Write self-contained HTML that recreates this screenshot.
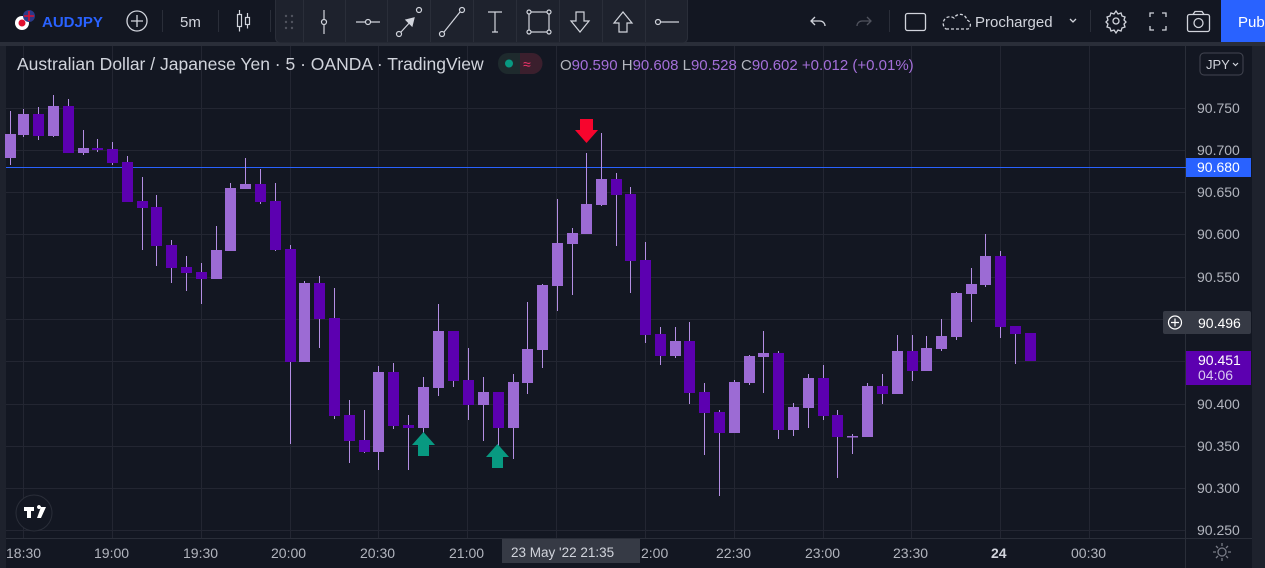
<!DOCTYPE html>
<html><head><meta charset="utf-8"><style>
*{margin:0;padding:0;box-sizing:border-box}
body{width:1265px;height:568px;overflow:hidden;background:#131722;font-family:"Liberation Sans",sans-serif;position:relative}
</style></head><body>
<svg width="1265" height="568" style="position:absolute;left:0;top:0" xmlns="http://www.w3.org/2000/svg" font-family="Liberation Sans, sans-serif">
<rect x="0" y="0" width="1265" height="42" fill="#131722"/>
<rect x="0" y="42" width="1265" height="4" fill="#2a2e39"/>
<rect x="0" y="46" width="6" height="522" fill="#1e222d"/>
<rect x="1252" y="46" width="13" height="522" fill="#1e222d"/>
<rect x="6" y="46" width="1246" height="522" fill="#131722"/>
<g stroke="#232632" stroke-width="1">
<line x1="23.5" y1="46" x2="23.5" y2="538"/><line x1="112.5" y1="46" x2="112.5" y2="538"/><line x1="201.5" y1="46" x2="201.5" y2="538"/><line x1="290.5" y1="46" x2="290.5" y2="538"/><line x1="378.5" y1="46" x2="378.5" y2="538"/><line x1="467.5" y1="46" x2="467.5" y2="538"/><line x1="556.5" y1="46" x2="556.5" y2="538"/><line x1="645.5" y1="46" x2="645.5" y2="538"/><line x1="734.5" y1="46" x2="734.5" y2="538"/><line x1="823.5" y1="46" x2="823.5" y2="538"/><line x1="911.5" y1="46" x2="911.5" y2="538"/><line x1="1000.5" y1="46" x2="1000.5" y2="538"/><line x1="1089.5" y1="46" x2="1089.5" y2="538"/>
<line x1="6" y1="108.5" x2="1185" y2="108.5"/><line x1="6" y1="150.5" x2="1185" y2="150.5"/><line x1="6" y1="192.5" x2="1185" y2="192.5"/><line x1="6" y1="234.5" x2="1185" y2="234.5"/><line x1="6" y1="277.5" x2="1185" y2="277.5"/><line x1="6" y1="319.5" x2="1185" y2="319.5"/><line x1="6" y1="361.5" x2="1185" y2="361.5"/><line x1="6" y1="404.5" x2="1185" y2="404.5"/><line x1="6" y1="446.5" x2="1185" y2="446.5"/><line x1="6" y1="488.5" x2="1185" y2="488.5"/><line x1="6" y1="530.5" x2="1185" y2="530.5"/>
</g>
<line x1="1185.5" y1="46" x2="1185.5" y2="568" stroke="#2a2e39"/>
<line x1="6" y1="538.5" x2="1252" y2="538.5" stroke="#2a2e39"/>
<line x1="6" y1="167.5" x2="1186" y2="167.5" stroke="#2962ff" stroke-width="1"/>
<g stroke="#b48ee4" stroke-width="1">
<line x1="10.5" y1="111" x2="10.5" y2="165"/><line x1="23.5" y1="109" x2="23.5" y2="137"/><line x1="38.5" y1="107" x2="38.5" y2="140"/><line x1="53.5" y1="95" x2="53.5" y2="137"/><line x1="68.5" y1="99" x2="68.5" y2="153"/><line x1="83.5" y1="130" x2="83.5" y2="155"/><line x1="97.5" y1="139" x2="97.5" y2="152"/><line x1="112.5" y1="142" x2="112.5" y2="165"/><line x1="127.5" y1="156" x2="127.5" y2="202"/><line x1="142.5" y1="177" x2="142.5" y2="250"/><line x1="156.5" y1="195" x2="156.5" y2="266"/><line x1="171.5" y1="240" x2="171.5" y2="283"/><line x1="186.5" y1="256" x2="186.5" y2="291"/><line x1="201.5" y1="263" x2="201.5" y2="304"/><line x1="216.5" y1="226" x2="216.5" y2="279"/><line x1="230.5" y1="183" x2="230.5" y2="251"/><line x1="245.5" y1="158" x2="245.5" y2="189"/><line x1="260.5" y1="169" x2="260.5" y2="204"/><line x1="275.5" y1="183" x2="275.5" y2="251"/><line x1="290.5" y1="245" x2="290.5" y2="444"/><line x1="304.5" y1="281" x2="304.5" y2="362"/><line x1="319.5" y1="276" x2="319.5" y2="348"/><line x1="334.5" y1="288" x2="334.5" y2="419"/><line x1="349.5" y1="400" x2="349.5" y2="463"/><line x1="364.5" y1="410" x2="364.5" y2="453"/><line x1="378.5" y1="366" x2="378.5" y2="470"/><line x1="393.5" y1="363" x2="393.5" y2="429"/><line x1="408.5" y1="415" x2="408.5" y2="470"/><line x1="423.5" y1="377" x2="423.5" y2="447"/><line x1="438.5" y1="304" x2="438.5" y2="396"/><line x1="453.5" y1="331" x2="453.5" y2="387"/><line x1="468.5" y1="348" x2="468.5" y2="420"/><line x1="483.5" y1="377" x2="483.5" y2="441"/><line x1="498.5" y1="392" x2="498.5" y2="458"/><line x1="513.5" y1="374" x2="513.5" y2="459"/><line x1="527.5" y1="302" x2="527.5" y2="394"/><line x1="542.5" y1="284" x2="542.5" y2="368"/><line x1="557.5" y1="199" x2="557.5" y2="311"/><line x1="572.5" y1="228" x2="572.5" y2="295"/><line x1="586.5" y1="153" x2="586.5" y2="234"/><line x1="601.5" y1="133" x2="601.5" y2="206"/><line x1="616.5" y1="173" x2="616.5" y2="246"/><line x1="630.5" y1="187" x2="630.5" y2="293"/><line x1="645.5" y1="242" x2="645.5" y2="343"/><line x1="660.5" y1="327" x2="660.5" y2="365"/><line x1="675.5" y1="327" x2="675.5" y2="358"/><line x1="689.5" y1="322" x2="689.5" y2="404"/><line x1="704.5" y1="383" x2="704.5" y2="455"/><line x1="719.5" y1="410" x2="719.5" y2="496"/><line x1="734.5" y1="380" x2="734.5" y2="433"/><line x1="749.5" y1="355" x2="749.5" y2="385"/><line x1="763.5" y1="331" x2="763.5" y2="393"/><line x1="778.5" y1="351" x2="778.5" y2="439"/><line x1="793.5" y1="403" x2="793.5" y2="436"/><line x1="808.5" y1="374" x2="808.5" y2="428"/><line x1="823.5" y1="365" x2="823.5" y2="420"/><line x1="837.5" y1="410" x2="837.5" y2="478"/><line x1="852.5" y1="434" x2="852.5" y2="454"/><line x1="867.5" y1="383" x2="867.5" y2="437"/><line x1="882.5" y1="374" x2="882.5" y2="404"/><line x1="897.5" y1="335" x2="897.5" y2="381"/><line x1="912.5" y1="335" x2="912.5" y2="381"/><line x1="926.5" y1="336" x2="926.5" y2="371"/><line x1="941.5" y1="319" x2="941.5" y2="351"/><line x1="956.5" y1="292" x2="956.5" y2="340"/><line x1="971.5" y1="268" x2="971.5" y2="322"/><line x1="985.5" y1="234" x2="985.5" y2="287"/><line x1="1000.5" y1="251" x2="1000.5" y2="338"/><line x1="1015.5" y1="326" x2="1015.5" y2="364"/>
</g>
<g fill="#9c6bd4">
<rect x="5" y="134" width="11" height="24"/><rect x="18" y="114" width="11" height="21"/><rect x="48" y="106" width="11" height="30"/><rect x="78" y="148" width="11" height="5"/><rect x="211" y="250" width="11" height="29"/><rect x="225" y="188" width="11" height="63"/><rect x="240" y="184" width="11" height="5"/><rect x="299" y="283" width="11" height="79"/><rect x="373" y="372" width="11" height="80"/><rect x="418" y="387" width="11" height="41"/><rect x="433" y="331" width="11" height="57"/><rect x="478" y="392" width="11" height="13"/><rect x="508" y="382" width="11" height="46"/><rect x="522" y="349" width="11" height="34"/><rect x="537" y="285" width="11" height="65"/><rect x="552" y="243" width="11" height="43"/><rect x="567" y="233" width="11" height="11"/><rect x="581" y="204" width="11" height="30"/><rect x="596" y="179" width="11" height="26"/><rect x="670" y="341" width="11" height="15"/><rect x="729" y="382" width="11" height="51"/><rect x="744" y="356" width="11" height="27"/><rect x="758" y="353" width="11" height="4"/><rect x="788" y="407" width="11" height="23"/><rect x="803" y="378" width="11" height="30"/><rect x="847" y="436" width="11" height="1.5"/><rect x="862" y="386" width="11" height="51"/><rect x="892" y="351" width="11" height="43"/><rect x="921" y="348" width="11" height="23"/><rect x="936" y="336" width="11" height="13"/><rect x="951" y="293" width="11" height="44"/><rect x="966" y="284" width="11" height="10"/><rect x="980" y="256" width="11" height="29"/>
</g>
<g fill="#5c00b0">
<rect x="33" y="114" width="11" height="22"/><rect x="63" y="106" width="11" height="47"/><rect x="92" y="148" width="11" height="2"/><rect x="107" y="149" width="11" height="14"/><rect x="122" y="162" width="11" height="40"/><rect x="137" y="201" width="11" height="7"/><rect x="151" y="207" width="11" height="39"/><rect x="166" y="245" width="11" height="23"/><rect x="181" y="267" width="11" height="6"/><rect x="196" y="272" width="11" height="7"/><rect x="255" y="184" width="11" height="18"/><rect x="270" y="201" width="11" height="49"/><rect x="285" y="249" width="11" height="113"/><rect x="314" y="283" width="11" height="36"/><rect x="329" y="318" width="11" height="98"/><rect x="344" y="415" width="11" height="26"/><rect x="359" y="440" width="11" height="12"/><rect x="388" y="372" width="11" height="54"/><rect x="403" y="425" width="11" height="3"/><rect x="448" y="331" width="11" height="50"/><rect x="463" y="380" width="11" height="25"/><rect x="493" y="392" width="11" height="36"/><rect x="611" y="179" width="11" height="16"/><rect x="625" y="194" width="11" height="67"/><rect x="640" y="260" width="11" height="75"/><rect x="655" y="334" width="11" height="22"/><rect x="684" y="341" width="11" height="52"/><rect x="699" y="392" width="11" height="21"/><rect x="714" y="412" width="11" height="21"/><rect x="773" y="353" width="11" height="77"/><rect x="818" y="378" width="11" height="38"/><rect x="832" y="415" width="11" height="22"/><rect x="877" y="386" width="11" height="8"/><rect x="907" y="351" width="11" height="20"/><rect x="995" y="256" width="11" height="71"/><rect x="1010" y="326" width="11" height="8"/><rect x="1025" y="333" width="11" height="28"/>
</g>
<path d="M580 119h13v11h5l-11.5 13-11.5-13h5z" fill="#f7052d"/>
<path d="M418 456h11v-11h6l-11.5-13-11.5 13h6z" fill="#089981"/>
<path d="M492 468h11v-11h6l-11.5-13-11.5 13h6z" fill="#089981"/>
<g fill="#b2b5be" font-size="14">
<text x="1197" y="113">90.750</text><text x="1197" y="155">90.700</text><text x="1197" y="197">90.650</text><text x="1197" y="239">90.600</text><text x="1197" y="282">90.550</text><text x="1197" y="409">90.400</text><text x="1197" y="451">90.350</text><text x="1197" y="493">90.300</text><text x="1197" y="535">90.250</text>
</g>
<rect x="1186" y="158" width="65" height="19" fill="#2962ff"/>
<text x="1197" y="172" fill="#fff" font-size="14">90.680</text>
<rect x="1163" y="311" width="88" height="23" rx="2" fill="#363a45"/>
<circle cx="1175" cy="322.5" r="6.5" fill="none" stroke="#fff" stroke-width="1.2"/>
<path d="M1175 318.5v8M1171 322.5h8" stroke="#fff" stroke-width="1.2"/>
<text x="1198" y="328" fill="#fff" font-size="14">90.496</text>
<rect x="1186" y="351" width="65" height="34" fill="#5c00b0"/>
<text x="1198" y="365" fill="#fff" font-size="14">90.451</text>
<text x="1198" y="380" fill="#d8c8f0" font-size="14">04:06</text>
<g fill="#b2b5be" font-size="14">
<text x="6" y="558">18:30</text><text x="94" y="558">19:00</text><text x="183" y="558">19:30</text><text x="271" y="558">20:00</text><text x="360" y="558">20:30</text><text x="449" y="558">21:00</text><text x="641" y="558">2:00</text><text x="716" y="558">22:30</text><text x="805" y="558">23:00</text><text x="893" y="558">23:30</text><text x="991" y="558" font-weight="bold" fill="#d1d4dc">24</text><text x="1071" y="558">00:30</text>
</g>
<rect x="502" y="539" width="138" height="24" fill="#363a45"/>
<text x="511" y="557" fill="#d1d4dc" font-size="13.5">23 May '22   21:35</text>
<circle cx="1222" cy="552" r="4" fill="none" stroke="#787b86" stroke-width="1.3"/>
<path d="M1222 543v3M1222 558v3M1213 552h3M1228 552h3M1216 546l2 2M1226 556l2 2M1216 558l2-2M1226 548l2-2" stroke="#787b86" stroke-width="1.3"/>
<circle cx="34" cy="513" r="18" fill="#131722" stroke="#2a2e39"/>
<path d="M24 507h10v4h-3v7h-4v-7h-3z M37 507a2 2 0 1 1 0 .1z M41 507h5l-5 11h-4z" fill="#fff"/>
<text x="17" y="70" fill="#d1d4dc" font-size="17.5">Australian Dollar / Japanese Yen · 5 · OANDA · TradingView</text>
<rect x="498" y="53" width="44" height="21" rx="10" fill="#1e2a2d"/>
<path d="M520 53h12a10 10 0 0 1 0 21h-12z" fill="#3b1f2d"/>
<circle cx="509" cy="63.5" r="4" fill="#089981"/>
<text x="523" y="69" fill="#f7356d" font-size="14">≈</text>
<g font-size="15"><text x="560" y="70" fill="#b2b5be">O<tspan fill="#a46fd9">90.590</tspan> H<tspan fill="#a46fd9">90.608</tspan> L<tspan fill="#a46fd9">90.528</tspan> C<tspan fill="#a46fd9">90.602</tspan> <tspan fill="#a46fd9">+0.012 (+0.01%)</tspan></text></g>
<rect x="1200" y="53" width="43" height="22" rx="4" fill="#131722" stroke="#434651"/>
<text x="1206" y="69" fill="#d1d4dc" font-size="13">JPY</text>
<path d="M1233 63l2.5 2.5 2.5-2.5" fill="none" stroke="#d1d4dc" stroke-width="1.2"/>
<circle cx="22" cy="23" r="7" fill="#fff"/><circle cx="22" cy="23" r="3.5" fill="#e0102f"/>
<circle cx="29" cy="16" r="6" fill="#2a3a8a"/><path d="M24 16h10M29 11v10" stroke="#e0102f" stroke-width="1.5"/>
<text x="42" y="27" fill="#2962ff" font-size="15" font-weight="bold">AUDJPY</text>
<circle cx="137" cy="21" r="10" fill="none" stroke="#d1d4dc" stroke-width="1.3"/>
<path d="M137 15v12M131 21h12" stroke="#d1d4dc" stroke-width="1.3"/>
<line x1="162.5" y1="10" x2="162.5" y2="32" stroke="#2a2e39"/>
<text x="180" y="27" fill="#d1d4dc" font-size="15">5m</text>
<line x1="218.5" y1="10" x2="218.5" y2="32" stroke="#2a2e39"/>
<g stroke="#d1d4dc" stroke-width="1.2" fill="none"><rect x="237.5" y="14.5" width="4" height="12"/><path d="M239.5 10v4.5M239.5 26.5v5"/><rect x="245.5" y="17.5" width="4" height="7"/><path d="M247.5 13v4.5M247.5 24.5v4"/></g>
<line x1="270.5" y1="10" x2="270.5" y2="32" stroke="#2a2e39"/>
<rect x="275.5" y="-5" width="412" height="48" rx="5" fill="#1e222d" stroke="#2a2e39"/>
<g stroke="#2a2e39"><line x1="303.5" y1="0" x2="303.5" y2="42"/><line x1="345.5" y1="0" x2="345.5" y2="42"/><line x1="387.5" y1="0" x2="387.5" y2="42"/><line x1="430.5" y1="0" x2="430.5" y2="42"/><line x1="473.5" y1="0" x2="473.5" y2="42"/><line x1="516.5" y1="0" x2="516.5" y2="42"/><line x1="559.5" y1="0" x2="559.5" y2="42"/><line x1="602.5" y1="0" x2="602.5" y2="42"/><line x1="645.5" y1="0" x2="645.5" y2="42"/></g>
<g fill="#50535e"><circle cx="286" cy="16" r="1.2"/><circle cx="292" cy="16" r="1.2"/><circle cx="286" cy="22" r="1.2"/><circle cx="292" cy="22" r="1.2"/><circle cx="286" cy="28" r="1.2"/><circle cx="292" cy="28" r="1.2"/></g>
<g stroke="#d1d4dc" stroke-width="1.2" fill="none">
<path d="M324 10v9M324 25v9"/><circle cx="324" cy="22" r="2.5"/>
<path d="M356 22h9M371 22h9"/><circle cx="368" cy="22" r="2.5"/>
<circle cx="399" cy="34" r="2.5"/><circle cx="419" cy="10" r="2.5"/><path d="M401 32l11-12"/><path d="M406 20l8-2-2 8z" fill="#d1d4dc"/>
<circle cx="442" cy="34" r="2.5"/><circle cx="462" cy="10" r="2.5"/><path d="M444 32l16-20"/>
<path d="M488 12h14M495 12v20M492 32h6"/>
<rect x="529" y="12" width="20" height="20"/><circle cx="529" cy="12" r="2" fill="#1e222d"/><circle cx="549" cy="12" r="2" fill="#1e222d"/><circle cx="529" cy="32" r="2" fill="#1e222d"/><circle cx="549" cy="32" r="2" fill="#1e222d"/>
<path d="M576 12h8v9h5l-9 11-9-11h5z"/>
<path d="M619 32h8v-9h5l-9-11-9 11h5z"/>
<circle cx="658" cy="22" r="2.5"/><path d="M661 22h18"/>
</g>
<g stroke="#d1d4dc" stroke-width="1.3" fill="none">
<path d="M815 17l-4 4 4 4M811 21h9a5 5 0 0 1 5 5"/>
<path d="M867 17l4 4-4 4M871 21h-9a5 5 0 0 0-5 5" stroke="#50535e"/>
<rect x="905.5" y="13.5" width="20" height="17" rx="2"/>
<path d="M946 29h22a5 5 0 0 0-1-9 7 7 0 0 0-13-2 6 6 0 0 0-8 11z" stroke-dasharray="3 2"/>
<path d="M1070 19l3 3 3-3"/>
<circle cx="1116" cy="21" r="3"/>
<path d="M1116 11l2 3 3-1 1 3 3 1-1 3 2 2-2 2 1 3-3 1-1 3-3-1-2 3-2-3-3 1-1-3-3-1 1-3-2-2 2-2-1-3 3-1 1-3 3 1z"/>
<path d="M1150 17v-4h4M1162 13h4v4M1166 26v4h-4M1154 30h-4v-4"/>
<rect x="1187.5" y="14.5" width="22" height="17" rx="2"/><circle cx="1198.5" cy="23" r="4.5"/><path d="M1193 14.5l2-3h7l2 3"/>
</g>
<line x1="889.5" y1="10" x2="889.5" y2="32" stroke="#2a2e39"/>
<line x1="1090.5" y1="10" x2="1090.5" y2="32" stroke="#2a2e39"/>
<text x="975" y="27" fill="#d1d4dc" font-size="15">Procharged</text>
<rect x="1221" y="0" width="44" height="42" fill="#2962ff"/>
<text x="1238" y="27" fill="#fff" font-size="15">Pub</text>
</svg>
</body></html>
